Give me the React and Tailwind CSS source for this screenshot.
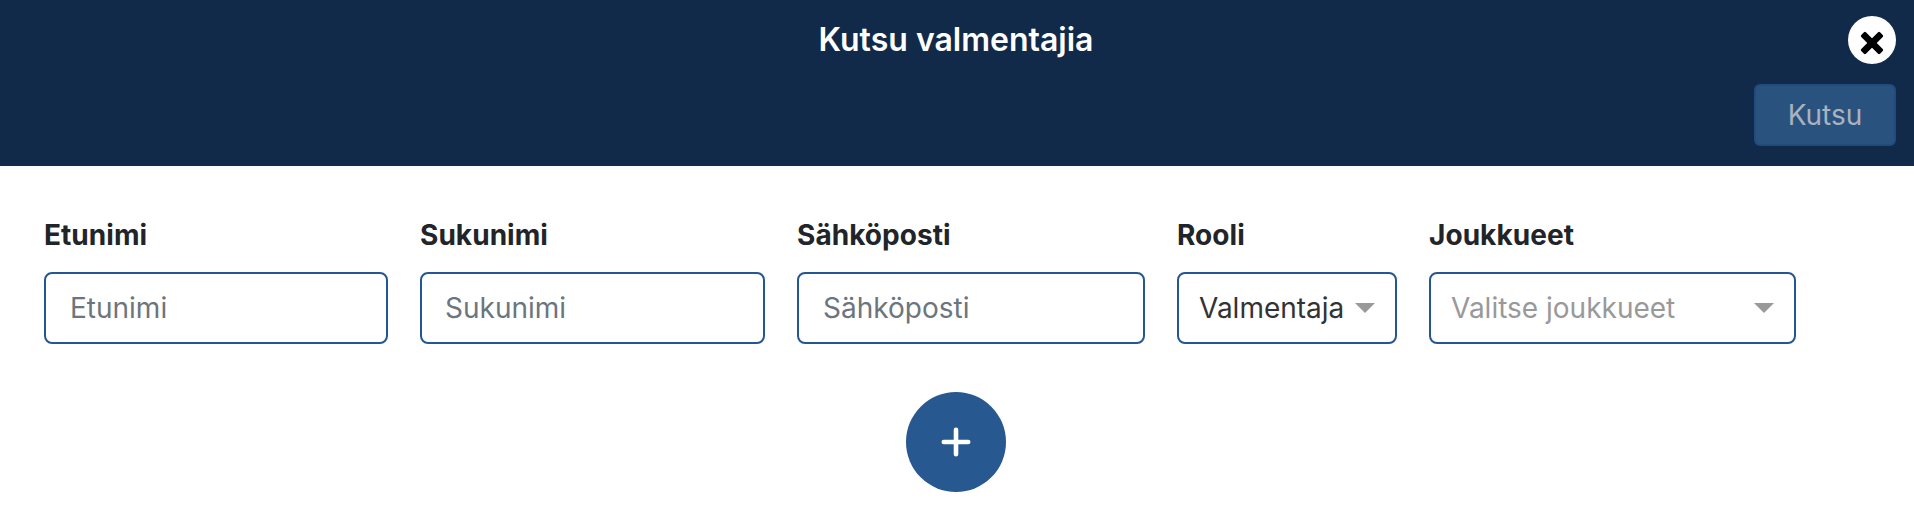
import React from "react";

const textFields = [
  { label: "Etunimi", width: "w-[344px]", padding: "pl-6" },
  { label: "Sukunimi", width: "w-[345px]", padding: "pl-[23px]" },
  { label: "Sähköposti", width: "w-[348px]", padding: "pl-6" },
];

const Caret = () => (
  <svg className="w-5 h-[10px] shrink-0" viewBox="0 0 20 10" fill="#999999">
    <path d="M0 0h20L10 10z" />
  </svg>
);

const Field = ({ label, width, children }) => (
  <div className={width}>
    <p className="h-[34px] mb-5 leading-[34px] font-bold text-[#212529] tracking-[0.05px]">
      {label}
    </p>
    {children}
  </div>
);

const App = () => {
  return (
    <div className="h-[518px] bg-white overflow-hidden font-['Inter',sans-serif] text-[28px]">
      {/* Header */}
      <header className="h-[166px] bg-[#122a49] px-[18px] pt-4">
        <div className="grid grid-cols-[48px_1fr_48px] items-center h-12">
          <h1 className="col-start-2 text-center text-[32px] leading-[48px] pr-[2px] font-semibold text-white">
            Kutsu valmentajia
          </h1>
          <button
            aria-label="Sulje"
            className="w-12 h-12 rounded-full bg-white flex items-center justify-center pt-[5px]"
          >
            <svg className="w-6 h-6" viewBox="0 0 24 24" fill="#000">
              <g transform="rotate(45 12 12)">
                <rect x="-1.3" y="8.7" width="26.6" height="6.6" rx="1.4" />
                <rect x="8.7" y="-1.3" width="6.6" height="26.6" rx="1.4" />
              </g>
            </svg>
          </button>
        </div>
        <div className="flex justify-end mt-5">
          <button
            disabled
            className="w-[142px] h-[62px] rounded-md border-2 border-[#214a7d] bg-[#2a527e] text-[#a9b2be] leading-[58px]"
          >
            Kutsu
          </button>
        </div>
      </header>

      {/* Invite row */}
      <div className="flex gap-8 pl-11 pt-[52px]">
        {textFields.map((field) => (
          <Field key={field.label} label={field.label} width={field.width}>
            <input
              placeholder={field.label}
              className={`block w-full h-[72px] rounded-lg border-2 border-[#245792] placeholder:text-[#6c757d] placeholder:opacity-100 ${field.padding}`}
            />
          </Field>
        ))}
        <Field label="Rooli" width="w-[220px]">
          <div className="flex items-center justify-between h-[72px] rounded-lg border-2 border-[#245792] pl-5 pr-5 text-[#333333]">
            <span>Valmentaja</span>
            <Caret />
          </div>
        </Field>
        <Field label="Joukkueet" width="w-[367px]">
          <div className="flex items-center justify-between h-[72px] rounded-lg border-2 border-[#245792] pl-5 pr-5 text-[#999999]">
            <span>Valitse joukkueet</span>
            <Caret />
          </div>
        </Field>
      </div>

      {/* Add another row */}
      <div className="flex justify-center mt-12 pr-[2px]">
        <button
          aria-label="Lisää"
          className="w-[100px] h-[100px] rounded-full bg-[#27588f] flex items-center justify-center"
        >
          <svg
            className="w-[30px] h-[30px]"
            viewBox="0 0 30 30"
            stroke="#fff"
            strokeWidth="4.6"
            strokeLinecap="round"
          >
            <path d="M15 2.8v24.4M2.8 15h24.4" />
          </svg>
        </button>
      </div>
    </div>
  );
};

export default App;
